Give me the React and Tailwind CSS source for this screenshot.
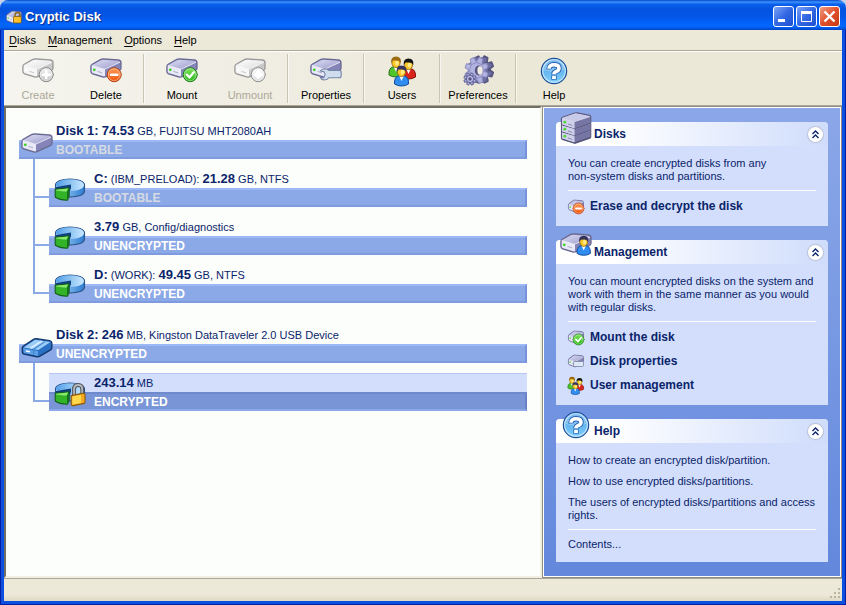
import React from 'react';
import clsx from 'clsx';

const tones = {
  violet: { top: '#dcdcf4', topEnd: '#9b9bcb', front: '#e9e9f8', side: '#8484b8', line: '#6a6a92', led: '#3fd023' },
  gray: { top: '#ffffff', topEnd: '#dcdcdc', front: '#f6f6f6', side: '#c9c9c9', line: '#999999', led: '#ffffff' },
};

/* Icons, all drawn on a 32x32 grid */

function Drive({ tone = 'violet' }) {
  const c = tones[tone];
  return (
    <g strokeLinejoin="round">
      <defs>
        <linearGradient id={`drive-${tone}`} x1="0" y1="0" x2="1" y2="1">
          <stop offset="0" stopColor={c.top} />
          <stop offset="1" stopColor={c.topEnd} />
        </linearGradient>
      </defs>
      <path d="M.9 11.5 Q.9 10 2.2 9.3 L10.5 4.6 Q12 3.9 13.8 4 L28.2 5 Q30.8 5.3 31 7.5 V13.2 Q31 14.6 29.6 15.3 L16 21.7 Q14.4 22.4 12.6 21.9 L2.6 18.8 Q.9 18.2 .9 16.6Z" fill={c.side} stroke={c.line} strokeWidth="1.3" />
      <path d="M2 10.3 L11 5.2 Q12.2 4.7 13.8 4.8 L28 5.8 Q29.6 6 30 7.2 L15.6 13.8 Q14.4 14.3 13 13.9Z" fill={`url(#drive-${tone})`} />
      <path d="M1.7 10.6 L13 14.1 Q14 14.4 15 14.1 V21.2 Q13.8 21.5 12.6 21.1 L2.8 18 Q1.7 17.6 1.7 16.6Z" fill={c.front} />
      <path d="M2 10.5 L13 13.9 Q14.4 14.3 15.6 13.8 L30 7.2" stroke="#ffffff" strokeOpacity=".8" strokeWidth=".9" fill="none" />
      <circle cx="4.3" cy="14.8" r="1.4" fill={c.led} />
      <path d="M7.5 16.4 L12 17.8" stroke={c.line} strokeOpacity=".5" />
    </g>
  );
}

function SmallDrive() {
  return (
    <g transform="translate(0 -1) scale(1 1.3)"><Drive /></g>
  );
}

function UsbDrive() {
  return (
    <g strokeLinejoin="round">
      <path d="M1.3 14 Q1.3 12.8 2.4 12.2 L13 5.2 Q14 4.6 15.3 4.8 L28.5 6.6 Q30.6 7 30.8 8.8 V14 Q30.8 15 29.6 15.8 L18.5 22.4 Q17.4 23 16 22.7 L2.8 20 Q1.3 19.6 1.3 18Z" fill="#2a70c5" stroke="#14396e" strokeWidth="1.4" />
      <path d="M2.6 13.4 L14 5.8 L29.5 8 L17.3 16Z" fill="#9accf8" />
      <path d="M2.2 14.2 L17 17 V21.9 L3 19.1Z" fill="#5b9fe6" />
      <path d="M9.5 14.2 L20.5 7.2" stroke="#dff1ff" strokeWidth="1.6" />
      <path d="M24 7.6 L12.6 15.2 V20.6" stroke="#3f83cd" strokeWidth="1.1" fill="none" />
      <path d="M5 17 L9 17.8" stroke="#ffffff" strokeWidth="1.4" />
    </g>
  );
}

const badges = {
  minus: { from: '#ff9a52', to: '#f0560f', rim: '#b8390a' },
  check: { from: '#7fe65a', to: '#2cb81b', rim: '#187c12' },
  plus: { from: '#f2f2f2', to: '#c4c4c4', rim: '#858585' },
  blank: { from: '#ffffff', to: '#d8d8d8', rim: '#8c8c8c' },
};

function Badge({ kind, small }) {
  const b = badges[kind];
  return (
    <g transform={small ? 'translate(-16.5 -9.6) scale(1.55)' : undefined} strokeLinecap="round" fill="none">
      <defs>
        <linearGradient id={`badge-${kind}`} x1="0" y1="0" x2="0" y2="1">
          <stop offset="0" stopColor={b.from} />
          <stop offset="1" stopColor={b.to} />
        </linearGradient>
      </defs>
      <circle cx="24.2" cy="19.7" r="7" fill={`url(#badge-${kind})`} stroke={b.rim} />
      <circle cx="24.2" cy="19.7" r="6" stroke="#ffffff" strokeOpacity=".5" strokeWidth=".8" />
      {kind === 'minus' && <path d="M21 19.7 H27.4" stroke="#ffffff" strokeWidth="2.4" />}
      {kind === 'check' && <path d="M20.8 19.6 L23.5 22.3 L27.8 17.2" stroke="#ffffff" strokeWidth="2.2" />}
      {kind === 'plus' && <path d="M20.8 19.7 H27.6 M24.2 16.3 V23.1" stroke="#ffffff" strokeWidth="2.6" />}
      {kind === 'blank' && <path d="M21.5 19.7 H27 M24.2 17 V22" stroke="#ffffff" strokeWidth="4" />}
    </g>
  );
}

function Wrench() {
  return (
    <path
      d="M10.2 16 Q11.6 13.7 14.8 13.7 Q17.8 13.8 18.8 15.4 H29.2 Q31.2 15.4 31.2 17.4 V20.8 Q31.2 22.8 29.2 22.8 H18.8 Q17.6 25 14.4 25 Q11.4 25 10.2 22.6 H13.8 L15.2 19.3 L13.8 16.6Z"
      fill="#cfdcee" stroke="#7686a6" strokeWidth="1.1" strokeLinejoin="round"
    />
  );
}

function Person({ x, y, shirt, rim, hair }) {
  return (
    <g transform={`translate(${x} ${y})`}>
      <path d="M-7 13 Q-7.4 6.5 -3.5 5 H3.5 Q7.4 6.5 7 13 Q4 15 0 15 Q-4 15 -7 13Z" fill={shirt} stroke={rim} />
      <path d="M-2.4 4.6 L0 10 L2.4 4.6Z" fill="#ffffff" />
      <ellipse cx="0" cy="0.6" rx="4.1" ry="5" fill="#fcc92a" stroke="#8d5d06" strokeWidth=".8" />
      <ellipse cx="1" cy="1.2" rx="1.7" ry="2.4" fill="#ffe98a" />
      <path d="M-4.8 1 Q-5.6 -5.6 0 -5.6 Q5.8 -5.4 4.8 1 Q3.6 -1.4 1 -1.6 L-3 -1.4Z" fill={hair} />
    </g>
  );
}

function People() {
  return (
    <g>
      <Person x={10} y={7} shirt="#4fc32d" rim="#227311" hair="#9a6b12" />
      <Person x={22.5} y={9} shirt="#d9241a" rim="#86100b" hair="#151515" />
      <Person x={15.5} y={16} shirt="#2f8df0" rim="#124c9c" hair="#34345c" />
    </g>
  );
}

/* A cog centred on 0,0, seen slightly from the side */
function Cog({ r, teeth, className }) {
  const angles = Array.from({ length: teeth }, (_, i) => (360 / teeth) * i + 22);
  return (
    <g className={className} strokeLinejoin="round">
      <circle r={r} />
      {angles.map((a) => (
        <path key={a} d={`M${-r * 0.34} ${-r * 0.8} L${-r * 0.22} ${-r * 1.4} H${r * 0.22} L${r * 0.34} ${-r * 0.8}Z`} transform={`rotate(${a})`} />
      ))}
    </g>
  );
}

function Gears() {
  return (
    <g>
      <g transform="translate(19.5 14.5) scale(.88 1)"><Cog r={9.6} teeth={8} className="fill-[#6e6ea2] stroke-[#55557f] stroke-2" /></g>
      <g transform="translate(17 15) scale(.88 1)"><Cog r={9.6} teeth={8} className="fill-[#6e6ea2]" /></g>
      <g transform="translate(14.5 15.5) scale(.88 1)">
        <Cog r={9.4} teeth={8} className="fill-[#b3b3e2] stroke-[#8f8fc2] stroke-1" />
        <ellipse cx="2.5" rx="4.4" ry="5" fill="#55557f" />
        <ellipse cx="4" rx="3" ry="4.2" fill="#efede3" />
      </g>
      <g transform="translate(8 24)">
        <Cog r={4.4} teeth={8} className="fill-[#bcbce8] stroke-[#66669a] stroke-1" />
        <circle r="1.7" fill="#55557f" />
      </g>
    </g>
  );
}

function Question() {
  return (
    <g fill="none">
      <defs>
        <linearGradient id="question-fill" x1="0" y1="0" x2="0" y2="1">
          <stop offset="0" stopColor="#4c9be6" />
          <stop offset="1" stopColor="#7fd0fb" />
        </linearGradient>
      </defs>
      <circle cx="16" cy="16" r="12.6" fill="url(#question-fill)" stroke="#1c4f96" strokeWidth="1.3" />
      <circle cx="16" cy="16" r="11.3" stroke="#bfe3ff" strokeWidth="1.2" />
      <path d="M5.5 15 Q6 5.5 16 5.2 Q26 5.5 26.5 15 Q16 18.5 5.5 15Z" fill="#ffffff" fillOpacity=".25" />
      <g stroke="#1f5fae" strokeWidth="5.4">
        <path d="M11 14.4 Q10.8 9.8 16 9.8 Q21 9.8 21 13.2 Q21 15.4 18 16.6 Q16 17.4 16 19.4" />
        <path d="M16 20.4 V24.6" />
      </g>
      <path d="M11 13.8 Q11 9.8 16 9.8 Q21 9.8 21 13.2 Q21 15.4 18 16.6 Q16 17.4 16 19.2" stroke="#ffffff" strokeWidth="3.6" />
      <path d="M16 20.8 V24" stroke="#ffffff" strokeWidth="3.8" />
    </g>
  );
}

function Pie({ locked }) {
  return (
    <g strokeLinejoin="round">
      <defs>
        <linearGradient id="pie-top" x1="0" y1="0" x2="1" y2="0">
          <stop offset="0" stopColor="#4f9fe8" />
          <stop offset="1" stopColor="#c9e8ff" />
        </linearGradient>
        <linearGradient id="pie-side" x1="0" y1="0" x2="1" y2="0">
          <stop offset="0" stopColor="#b5dffd" />
          <stop offset="1" stopColor="#2c7bd0" />
        </linearGradient>
      </defs>
      <path d="M1.5 11 C1.5 3 30.5 3 30.5 11 V17 C30.5 21 24 23.2 15 23 V15 L1.5 16Z" fill="url(#pie-side)" stroke="#2a5288" strokeWidth="1.1" />
      <path d="M2 11 C2 3.8 30 3.8 30 11 C30 15 23 17 16.5 16.8 V11 L3 12.8Z" fill="url(#pie-top)" />
      <path d="M2 13 L17 10.4 V14 L15 18 L2 16Z" fill="#12407f" />
      <path d="M1.2 15.2 L15 13.8 V22.6 L13.4 26.2 Q5 26 1.2 23Z" fill="#33b327" stroke="#12601a" strokeWidth="1.1" />
      <path d="M15 14 L13 17.6 V26 L14.8 22.4Z" fill="#12711a" />
      <path d="M2 15.8 L14 14.6 L12.6 17.4 Q6 17.6 2 16.6Z" fill="#8be96f" />
      {locked && (
        <g>
          <path d="M20 18 V11.5 Q20 7 24.2 7 Q28.2 7 28.2 11.2 V17" fill="none" stroke="#50545c" strokeWidth="3.8" />
          <path d="M20 18 V11.5 Q20 7 24.2 7 Q28.2 7 28.2 11.2 V17" fill="none" stroke="#b3b7bd" strokeWidth="1.8" />
          <path d="M17.2 17.6 L28.8 15.4 Q31 15.2 31 16.8 V24 Q31 25 30 25.4 L19.4 27.6 Q17.2 27.8 17.2 26Z" fill="#f7a91f" stroke="#8c5c06" strokeWidth="1.1" />
          <path d="M18.4 18.6 L27 16.8 V25 L18.4 26.6Z" fill="#ffd84c" />
        </g>
      )}
    </g>
  );
}

function RackSlab({ y }) {
  return (
    <g transform={`translate(0 ${y})`}>
      <path d="M2 6.4 L14.5 10 V17 L2 13Z" fill="#d0d0ea" />
      <path d="M14.5 10 L30 5 V11.5 L14.5 17Z" fill="#7676a4" />
      <path d="M2 13 L14.5 17 L30 11.5" fill="none" stroke="#4b4b70" />
      <path d="M8 12 L12.4 13.4" stroke="#8f8fb8" />
      <circle cx="4.8" cy="10.2" r="1.4" fill="#4fd832" />
    </g>
  );
}

function Rack() {
  return (
    <g strokeLinejoin="round">
      <path d="M1.5 6.4 Q1.5 5.6 2.4 5.3 L15 1 Q16 .7 17 .9 L29.5 3.4 Q30.7 3.8 30.7 5 V25 Q30.7 25.9 29.8 26.3 L16 31 Q15 31.3 14 31 L2.5 27.4 Q1.5 27 1.5 26Z" fill="#dedef2" stroke="#5b5b82" strokeWidth="1.2" />
      <RackSlab y={0} />
      <RackSlab y={7} />
      <RackSlab y={14} />
      <path d="M2.2 6 L15.4 1.6 L29.8 4.4 L14.5 9.8Z" fill="#c9c9e8" />
    </g>
  );
}

const icons = {
  drive: <Drive />,
  usb: <UsbDrive />,
  create: <><Drive tone="gray" /><Badge kind="plus" /></>,
  delete: <><Drive /><Badge kind="minus" /></>,
  mount: <><Drive /><Badge kind="check" /></>,
  unmount: <><Drive tone="gray" /><Badge kind="blank" /></>,
  properties: <><Drive /><Wrench /></>,
  deleteSmall: <><SmallDrive /><Badge kind="minus" small /></>,
  mountSmall: <><SmallDrive /><Badge kind="check" small /></>,
  propertiesSmall: (
    <>
      <SmallDrive />
      <rect x="11" y="17" width="20" height="10" rx="2" fill="#dfe7f4" stroke="#7686a6" strokeWidth="1.6" />
    </>
  ),
  manage: <><Drive /><g transform="translate(8.5 3) scale(.95)"><Person x={16} y={8.5} shirt="#2f8df0" rim="#124c9c" hair="#34345c" /></g></>,
  people: <People />,
  peopleSmall: <g transform="translate(-4 -2) scale(1.2)"><People /></g>,
  gears: <Gears />,
  question: <Question />,
  pie: <Pie />,
  pieLocked: <Pie locked />,
  rack: <Rack />,
};

function Icon({ name, className }) {
  return (
    <svg viewBox="0 0 32 32" aria-hidden="true" className={clsx('shrink-0 overflow-visible', className)}>
      {icons[name]}
    </svg>
  );
}

/* Title bar */

function WindowButton({ label, close, children }) {
  return (
    <button
      type="button"
      aria-label={label}
      className={clsx(
        'flex size-[21px] items-center justify-center rounded-[3px] border border-white bg-linear-to-br',
        close ? 'from-[#ee9a80] via-[#e2502b] to-[#c23a10]' : 'from-[#7ba2f5] via-[#3368e4] to-[#1b4fd0]'
      )}
    >
      <svg viewBox="0 0 19 19" className="size-[19px]" fill="none" stroke="#ffffff">{children}</svg>
    </button>
  );
}

function TitleBar() {
  return (
    <header className="flex h-[30px] items-center rounded-t-lg bg-[linear-gradient(#0a48c8_0%,#3b93ff_7%,#0b5fec_14%,#0453e0_30%,#0456e6_55%,#0265fd_80%,#0264fa_90%,#0043c0_100%)] pt-[3px] pr-[6px] pl-[6px]">
      <svg viewBox="0 0 32 32" aria-hidden="true" className="size-4 shrink-0">
        <SmallDrive />
        <path d="M18 17 V12 Q18 7 23 7 Q28 7 28 12 V17" fill="none" stroke="#8a6a20" strokeWidth="3" />
        <rect x="15" y="15" width="15.5" height="13" rx="2" fill="#fbc02d" stroke="#7c5508" strokeWidth="1.5" />
      </svg>
      <h1 className="ml-[3px] flex-1 text-[13px] leading-4 font-bold text-white [text-shadow:1px_1px_1px_#0b2a86]">Cryptic Disk</h1>
      <div className="flex gap-[2px]">
        <WindowButton label="Minimize"><path d="M4 13.5 H11" strokeWidth="3" /></WindowButton>
        <WindowButton label="Maximize">
          <path d="M4.5 5 V14.5 H14.5 V5" />
          <path d="M4 5.5 H15" strokeWidth="3" />
        </WindowButton>
        <WindowButton label="Close" close><path d="M4.5 4.5 L14.5 14.5 M14.5 4.5 L4.5 14.5" strokeWidth="2.4" /></WindowButton>
      </div>
    </header>
  );
}

function MenuBar() {
  return (
    <nav className="flex h-[21px] items-center gap-3 border-b border-[#aca899] bg-[#ece9d8] px-[5px]">
      {['Disks', 'Management', 'Options', 'Help'].map((item) => (
        <button key={item} type="button" className="leading-[13px]">
          <span className="underline underline-offset-2">{item[0]}</span>{item.slice(1)}
        </button>
      ))}
    </nav>
  );
}

const toolGroups = [
  [{ label: 'Create', icon: 'create', disabled: true }, { label: 'Delete', icon: 'delete' }],
  [{ label: 'Mount', icon: 'mount' }, { label: 'Unmount', icon: 'unmount', disabled: true }],
  [{ label: 'Properties', icon: 'properties' }],
  [{ label: 'Users', icon: 'people' }],
  [{ label: 'Preferences', icon: 'gears' }],
  [{ label: 'Help', icon: 'question' }],
];

function Toolbar() {
  return (
    <div className="flex h-[54px] border-t border-white bg-linear-to-r from-[#f5f4ee] to-[#ebe8d8] to-60% py-[2px]">
      {toolGroups.map((group, i) => (
        <React.Fragment key={i}>
          {i > 0 && <div className="mx-[3px] w-[2px] border-l border-[#c9c5b2] bg-white/60" />}
          {group.map((tool) => (
            <button key={tool.label} type="button" disabled={tool.disabled} className="flex w-[68px] flex-col items-center pt-px disabled:text-[#aca899]">
              <Icon name={tool.icon} className="size-8" />
              <span className="leading-[17px]">{tool.label}</span>
            </button>
          ))}
        </React.Fragment>
      ))}
    </div>
  );
}

/* Disk tree */

const disks = [
  {
    name: 'Disk 1:', size: '74.53', info: 'GB, FUJITSU MHT2080AH', status: 'BOOTABLE', icon: 'drive',
    volumes: [
      { name: 'C:', label: '(IBM_PRELOAD):', size: '21.28', info: 'GB, NTFS', status: 'BOOTABLE', icon: 'pie' },
      { size: '3.79', info: 'GB, Config/diagnostics', status: 'UNENCRYPTED', icon: 'pie' },
      { name: 'D:', label: '(WORK):', size: '49.45', info: 'GB, NTFS', status: 'UNENCRYPTED', icon: 'pie' },
    ],
  },
  {
    name: 'Disk 2:', size: '246', info: 'MB, Kingston DataTraveler 2.0 USB Device', status: 'UNENCRYPTED', icon: 'usb',
    volumes: [{ size: '243.14', info: 'MB', status: 'ENCRYPTED', icon: 'pieLocked', selected: true }],
  },
];

function TreeRow({ item, root }) {
  return (
    <div className={clsx('relative flex-1', item.selected && 'bg-[#d3defc]')}>
      <p className={clsx('h-[19px] leading-[19px] whitespace-nowrap text-[#0a246a]', root ? 'pl-[37px]' : 'pl-[45px]', item.selected && 'shadow-[inset_0_1px_0_#b4c6f3]')}>
        {item.name && <><b className="text-[13px]">{item.name}</b> </>}
        {item.label && <>{item.label} </>}
        <b className="text-[13px]">{item.size}</b> {item.info}
      </p>
      <p
        className={clsx(
          'h-[19px] border-t-2 border-r-2 border-b-2 text-[12px] leading-4 font-bold',
          root ? 'pl-[37px]' : 'pl-[45px]',
          item.selected ? 'border-t-[#6e8acc] border-r-[#6683c8] border-b-[#8ba8ea] bg-[#7a95d6]' : 'border-t-[#9cb8f6] border-r-[#7692dc] border-b-[#7e9be0] bg-[#8ca9e7]',
          item.status === 'BOOTABLE' ? 'text-[#d6dae2]' : 'text-white'
        )}
      >
        {item.status}
      </p>
      <Icon name={item.icon} className={clsx('absolute size-8', root ? 'top-[9px] left-[2px]' : 'top-[5px] left-[5px]')} />
    </div>
  );
}

function DiskTree() {
  return (
    <main className="min-w-0 flex-1 border-2 border-t-[#716f64] border-r-[#f1efe2] border-b-[#f1efe2] border-l-[#716f64] bg-[#fcfefc] p-[13px]">
      <ul className="space-y-[22px]">
        {disks.map((disk) => (
          <li key={disk.name}>
            <TreeRow item={disk} root />
            <ul className="ml-[14px]">
              {disk.volumes.map((volume, i) => (
                <li key={volume.size} className="flex">
                  <div className="flex w-4 flex-col">
                    <div className="h-[39px] border-b-2 border-l-2 border-[#8ca9e7]" />
                    {i < disk.volumes.length - 1 && <div className="flex-1 border-l-2 border-[#8ca9e7]" />}
                  </div>
                  <div className="flex flex-1 pt-[10px]">
                    <TreeRow item={volume} />
                  </div>
                </li>
              ))}
            </ul>
          </li>
        ))}
      </ul>
    </main>
  );
}

/* Side panel */

function Panel({ title, icon, children }) {
  return (
    <section className="rounded-t bg-[#d3defc]">
      <div className="relative flex h-6 items-center justify-between rounded-t bg-linear-to-r from-white from-20% to-[#cfdcfb] pr-[5px] pl-[38px]">
        <Icon name={icon} className="absolute -top-[10px] left-1 size-8" />
        <h2 className="text-[12px] leading-6 font-bold">{title}</h2>
        <button type="button" aria-label={`Collapse ${title}`} className="flex size-[15px] items-center justify-center rounded-full bg-white shadow-[0_0_1px_1px_#b9c1d6]">
          <svg viewBox="0 0 9 9" className="size-[9px]" fill="none" stroke="#0a246a" strokeWidth="1.4">
            <path d="M1.5 4 L4.5 1 L7.5 4 M1.5 8 L4.5 5 L7.5 8" />
          </svg>
        </button>
      </div>
      <div className="px-3 pt-[11px]">{children}</div>
    </section>
  );
}

function TaskLinks({ links }) {
  return (
    <ul className="mt-[7px] border-t border-white pt-[3px] pb-2">
      {links.map((link) => (
        <li key={link.label}>
          <a href="#" className="flex h-6 items-center gap-[6px] text-[12px] font-bold">
            <Icon name={link.icon} className="size-4" />
            {link.label}
          </a>
        </li>
      ))}
    </ul>
  );
}

function SidePanel() {
  return (
    <aside className="w-[300px] shrink-0 border border-[#8f8c7f]">
      <div className="h-full space-y-[14px] border border-white bg-linear-to-b from-[#8ba7e8] to-[#6388dc] px-3 py-[14px] leading-[13px] text-[#0a246a]">
        <Panel title="Disks" icon="rack">
          <p>You can create encrypted disks from any<br />non-system disks and partitions.</p>
          <TaskLinks links={[{ label: 'Erase and decrypt the disk', icon: 'deleteSmall' }]} />
        </Panel>
        <Panel title="Management" icon="manage">
          <p>You can mount encrypted disks on the system and work with them in the same manner as you would with regular disks.</p>
          <TaskLinks
            links={[
              { label: 'Mount the disk', icon: 'mountSmall' },
              { label: 'Disk properties', icon: 'propertiesSmall' },
              { label: 'User management', icon: 'peopleSmall' },
            ]}
          />
        </Panel>
        <Panel title="Help" icon="question">
          <ul className="space-y-2">
            <li><a href="#" className="block">How to create an encrypted disk/partition.</a></li>
            <li><a href="#" className="block">How to use encrypted disks/partitions.</a></li>
            <li><a href="#" className="block">The users of encrypted disks/partitions and access rights.</a></li>
          </ul>
          <div className="mt-[7px] border-t border-white pt-2 pb-[11px]">
            <a href="#" className="block">Contents...</a>
          </div>
        </Panel>
      </div>
    </aside>
  );
}

function StatusBar() {
  return (
    <footer className="flex h-[23px] items-end justify-end border-t border-[#aca899] bg-linear-to-b from-[#ece9d8] from-70% to-[#dcd8c4]">
      <svg viewBox="0 0 12 12" aria-hidden="true" className="mb-px size-3" fill="#b8b4a2">
        <path d="M8 0h2v2H8z M4 4h2v2H4z M8 4h2v2H8z M0 8h2v2H0z M4 8h2v2H4z M8 8h2v2H8z" />
      </svg>
    </footer>
  );
}

export default function App() {
  return (
    <div className="flex min-h-screen flex-col bg-[#c9d2e8] font-['Liberation_Sans',Arial,sans-serif] text-[11px] text-black">
      <TitleBar />
      <div className="flex flex-1 flex-col bg-[#0a4fe0] px-1 pb-1 shadow-[inset_1px_-1px_0_#001ea0,inset_-1px_0_0_#001ea0]">
        <MenuBar />
        <Toolbar />
        <div className="flex flex-1 border-t border-[#aca899] bg-[#ece9d8]">
          <DiskTree />
          <SidePanel />
        </div>
        <StatusBar />
      </div>
    </div>
  );
}
